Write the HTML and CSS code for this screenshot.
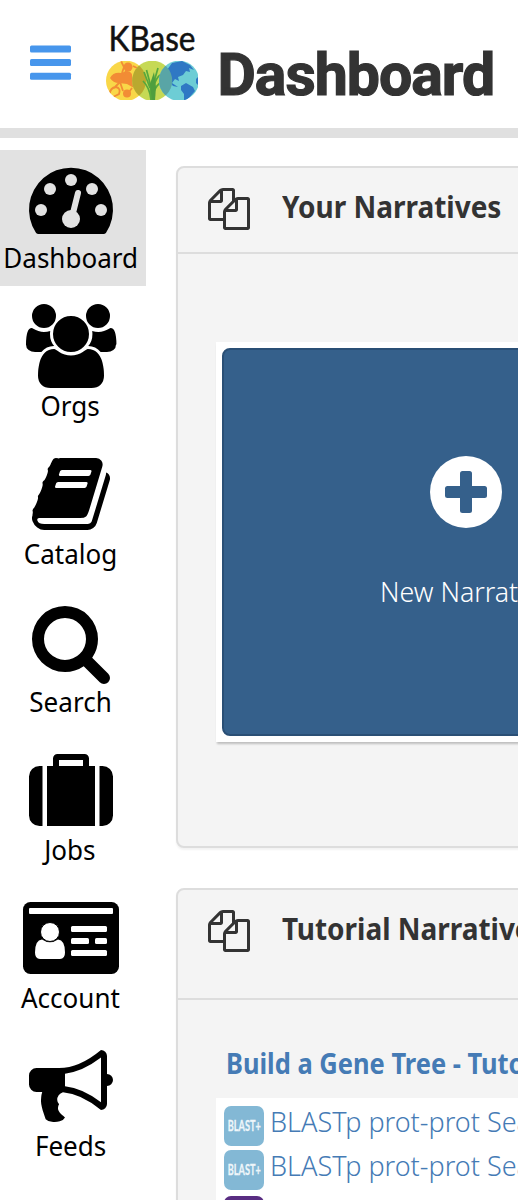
FILE: index.html
```html
<!DOCTYPE html>
<html lang="en">
<head>
<meta charset="utf-8">
<title>KBase Dashboard</title>
<link rel="stylesheet" href="styles.css">
</head>
<body>
<svg class="defs" width="0" height="0" aria-hidden="true">
  <symbol id="copy" viewBox="0 0 1792 1792"><path d="M1696 384q40 0 68 28t28 68v1216q0 40-28 68t-68 28h-960q-40 0-68-28t-28-68v-288h-544q-40 0-68-28t-28-68v-672q0-40 20-88t48-76l408-408q28-28 76-48t88-20h416q40 0 68 28t28 68v328q68-40 128-40h416zm-544 213l-299 299h299v-299zm-640-384l-299 299h299v-299zm196 647l316-316v-416h-384v416q0 40-28 68t-68 28h-416v640h512v-256q0-40 20-88t48-76zm956 804v-1152h-384v416q0 40-28 68t-68 28h-416v640h896z"/></symbol>
</svg>
<header class="topbar">
  <svg class="menu" viewBox="0 0 42 36"><g fill="#4796ec"><rect x="0" y="0.4" width="41" height="7" rx="1.5"/><rect x="0" y="14.1" width="41" height="7" rx="1.5"/><rect x="0" y="27.8" width="41" height="7" rx="1.5"/></g></svg>
  <svg class="logo" viewBox="106 20 92 84">
    <clipPath id="c1"><circle cx="126" cy="80.7" r="20"/></clipPath>
    <clipPath id="c3"><circle cx="179" cy="80.7" r="20"/></clipPath>
    <clipPath id="low"><rect x="106" y="61" width="92" height="39"/></clipPath>
    <text x="108.500" y="50.5" textLength="87" lengthAdjust="spacingAndGlyphs" class="logo-text">KBase</text>
    <g clip-path="url(#low)">
      <circle cx="126" cy="80.7" r="20" fill="#f9d748"/>
      <g clip-path="url(#c1)" fill="#f28c35" stroke="#f28c35">
        <path d="M110 78q3-6 11-5l6-2q6 1 5 6l7 7-3 5-9-5-8-1q-6 0-9-5z" stroke="none"/>
        <circle cx="128" cy="67" r="4.5" stroke="none"/><circle cx="127" cy="93.500" r="4" stroke="none"/>
        <path d="M121 61l3 6-2 6M126 71l-2 4M120 82l-6 6M120 82l3 9M110 96q-1-8 6-9 5 1 3 7l-6 3M133 66l4 2M132 88l-3 4" fill="none" stroke-width="1.8"/>
      </g>
      <circle cx="152.200" cy="80.700" r="20" fill="#c6d955"/>
      <circle cx="152.200" cy="80.700" r="20" fill="#b9a92f" clip-path="url(#c1)"/>
      <path d="M151.500 101l-1-16-4-15M152 100l2-18 4-14M151 100q-1-12-8-19M152 100q1-12 9-18M150 88l-6-16M153 88q3-10 7-13" fill="none" stroke="#56a83d" stroke-width="1.700"/>
      <path d="M150 84l2 17h3l1-14-2-15z" fill="#4e9e3e"/>
      <circle cx="179" cy="80.700" r="20" fill="#6dcdd5"/>
      <g clip-path="url(#c3)" fill="#2f78c4">
        <path d="M167 70l5-7 10-2 8 4 4 5-5-2 1 4-4-1-3 4-5 2 1 4-4-2-3 4 6 4-5-1-6-7z"/>
        <path d="M181 86l5-3 7 4 2 4-7 8-4 3 0-8-3-4zM196 79l3-3v10l-3-3z"/>
        <circle cx="152.200" cy="80.700" r="20" fill="#59a5a6"/>
      </g>
    </g>
  </svg>
  <h1 class="title">Dashboard</h1>
</header>
<div class="layout">
  <nav class="side">
    <a class="item active">
      <svg class="glyph" viewBox="0 0 146 89"><path d="M38 84Q36.500 84 35.800 82.600A42 42 0 1 1 106.200 82.600Q105.500 84 104 84Z"/><g fill="#e2e2e2"><circle cx="71" cy="30" r="6"/><circle cx="50" cy="39" r="6"/><circle cx="92" cy="39" r="6"/><circle cx="41" cy="60" r="6"/><circle cx="101" cy="60" r="6"/><circle cx="71" cy="69" r="9"/><path d="M72 67L78 43" stroke="#e2e2e2" stroke-width="6" stroke-linecap="round"/></g></svg>
      <span class="label">Dashboard</span>
    </a>
    <a class="item">
      <svg class="glyph" viewBox="0 0 146 89"><path transform="translate(23 6) scale(.046875)" d="M657 896q-162 5-265 128h-134q-82 0-138-40.500t-56-118.500q0-353 124-353 6 0 43.500 21t97.500 42.500 119 21.500q67 0 133-23-5 37-5 66 0 159 90 256zm1071 637q0 120-73 189.500t-194 69.500h-874q-121 0-194-69.500t-73-189.500q0-53 3.500-103.500t14-109 26.500-108.500 43-97.500 62-81 85.500-53.500 111.500-20q10 0 43 21.500t73 48 107 48 135 21.500 135-21.500 107-48 73-48 43-21.500q61 0 111.500 20t85.500 53.500 62 81 43 97.500 26.500 108.500 14 109 3.500 103.500zm-1024-1277q0 106-75 181t-181 75-181-75-75-181 75-181 181-75 181 75 75 181zm704 384q0 159-112.500 271.500t-271.500 112.500-271.500-112.500-112.500-271.500 112.500-271.500 271.500-112.500 271.500 112.500 112.500 271.500zm576 225q0 78-56 118.500t-138 40.500h-134q-103-123-265-128 90-97 90-256 0-29-5-66 66 23 133 23 59 0 119-21.500t97.500-42.500 43.500-21q124 0 124 353zm-128-609q0 106-75 181t-181 75-181-75-75-181 75-181 181-75 181 75 75 181z"/></svg>
      <span class="label">Orgs</span>
    </a>
    <a class="item">
      <svg class="glyph" viewBox="0 0 146 89"><path transform="translate(29 6) scale(.046875)" d="M1703 478q40 57 18 129l-275 906q-19 64-76.500 107.500t-122.500 43.500h-923q-77 0-148.500-53.500t-99.500-131.500q-24-67-2-127 0-4 3-27t4-37q1-8-3-21.500t-3-19.500q2-11 8-21t16.500-23.500 16.500-23.500q23-38 45-91.500t30-91.500q3-10 .5-30t-.5-28q3-11 17-28t17-23q21-36 42-92t25-90q1-9-2.500-32t.5-28q4-13 22-30.500t22-22.500q19-26 42.500-84.500t27.500-96.500q1-8-3-25.500t-2-26.500q2-8 9-18t18-23 17-21q8-12 16.500-30.500t15-35 16-36 19.500-32 26.500-23.500 36-11.500 47.500 5.500l-1 3q38-9 51-9h761q74 0 114 56t18 130l-274 906q-36 119-71.500 153.500t-128.500 34.500h-869q-27 0-38 15-11 16-1 43 24 70 144 70h923q29 0 56-15.500t35-41.500l300-987q7-22 5-57 38 15 59 43zm-1064 2q-4 13 2 22.500t20 9.500h608q13 0 25.500-9.500t16.500-22.500l21-64q4-13-2-22.500t-20-9.500h-608q-13 0-25.500 9.500t-16.500 22.500zm-83 256q-4 13 2 22.500t20 9.500h608q13 0 25.500-9.500t16.500-22.500l21-64q4-13-2-22.500t-20-9.500h-608q-13 0-25.500 9.500t-16.500 22.500z"/></svg>
      <span class="label">Catalog</span>
    </a>
    <a class="item">
      <svg class="glyph" viewBox="0 0 146 89"><path transform="translate(29 6) scale(.046875)" d="M1216 832q0-185-131.500-316.500t-316.500-131.500-316.500 131.500-131.500 316.500 131.500 316.500 316.500 131.500 316.500-131.500 131.500-316.500zm512 832q0 52-38 90t-90 38q-54 0-90-38l-343-342q-179 124-399 124-143 0-273.500-55.500t-225-150-150-225-55.500-273.500 55.500-273.500 150-225 225-150 273.500-55.500 273.500 55.500 225 150 150 225 55.500 273.500q0 220-124 399l343 343q37 37 37 90z"/></svg>
      <span class="label">Search</span>
    </a>
    <a class="item">
      <svg class="glyph" viewBox="0 0 146 89"><path transform="translate(29 12) scale(.046875)" d="M640 256h512v-128h-512v128zm-352 0v1280h-64q-92 0-158-66t-66-158v-832q0-92 66-158t158-66h64zm1120 0v1280h-1024v-1280h128v-160q0-40 28-68t68-28h576q40 0 68 28t28 68v160h128zm384 224v832q0 92-66 158t-158 66h-64v-1280h64q92 0 158 66t66 158z"/></svg>
      <span class="label">Jobs</span>
    </a>
    <a class="item">
      <svg class="glyph" viewBox="0 0 146 89"><rect x="23" y="12" width="96" height="72" rx="7.500"/><g fill="#fff"><rect x="29" y="18" width="84" height="6" rx="1"/><path d="M42 49.500Q50 55 58 49.500Q65 50 65 62.500Q65 69 60 69H40Q35 69 35 62.500Q35 50 42 49.500Z"/><circle cx="50" cy="42" r="9.500" stroke="#000" stroke-width="1"/><rect x="71" y="36" width="36" height="6" rx="1.500"/><rect x="71" y="48" width="18" height="6" rx="1.500"/><rect x="95" y="48" width="12" height="6" rx="1.500"/><rect x="71" y="60" width="36" height="6" rx="1.500"/></g></svg>
      <span class="label">Account</span>
    </a>
    <a class="item">
      <svg class="glyph" viewBox="0 0 146 89"><path transform="translate(29 6) scale(.046875)" d="M1664 640q53 0 90.500 37.500t37.500 90.500-37.500 90.500-90.500 37.500v384q0 52-38 90t-90 38q-417-347-812-380-58 19-91 66t-31 100.500 40 92.500q-20 33-23 65.500t6 58 33.500 55 48 50 61.500 50.500q-29 58-111.500 83t-168.500 11.500-132-55.500q-7-23-29.500-87.500t-32-94.500-23-89-15-101 3.500-98.500 22-110.500h-122q-66 0-113-47t-47-113v-192q0-66 47-113t113-47h480q435 0 896-384 52 0 90 38t38 90v384zm-128 604v-954q-394 302-768 343v270q377 42 768 341z"/></svg>
      <span class="label">Feeds</span>
    </a>
  </nav>
  <main class="content">
    <section class="panel narratives">
      <div class="panel-head"><svg class="copy"><use href="#copy"/></svg><h2 class="panel-title">Your Narratives</h2></div>
      <div class="card">
        <div class="new-button">
          <svg class="plus" viewBox="0 0 72 72"><circle cx="36" cy="36" r="36" fill="#fff"/><rect x="15" y="30" width="42" height="12" rx="2.500"/><rect x="30" y="15" width="12" height="42" rx="2.500"/></svg>
          <span class="new-text">New Narrative</span>
        </div>
      </div>
    </section>
    <section class="panel tutorials">
      <div class="panel-head tall"><svg class="copy"><use href="#copy"/></svg><h2 class="panel-title">Tutorial Narratives</h2></div>
      <h3 class="tutorial-title"><span class="tutorial-text">Build a Gene Tree - Tutorial</span></h3>
      <div class="apps">
        <div class="app"><svg class="badge" viewBox="0 0 40 40"><rect width="40" height="40" rx="7" fill="#83b8d5"/><text x="3.800" y="25" textLength="33" lengthAdjust="spacingAndGlyphs" class="badge-text">BLAST+</text></svg><span class="app-name">BLASTp prot-prot Search</span></div>
        <div class="app"><svg class="badge" viewBox="0 0 40 40"><rect width="40" height="40" rx="7" fill="#83b8d5"/><text x="3.800" y="25" textLength="33" lengthAdjust="spacingAndGlyphs" class="badge-text">BLAST+</text></svg><span class="app-name">BLASTp prot-prot Search</span></div>
        <div class="app purple"><svg class="badge" viewBox="0 0 40 40"><rect width="40" height="40" rx="7" fill="#592d82"/></svg></div>
      </div>
    </section>
  </main>
</div>
</body>
</html>
```
FILE: styles.css
```css
* { box-sizing: border-box; }
html, body { margin: 0; height: 1200px; overflow: hidden; }
body { width: 518px; background: #fff; color: #333; font-family: "Noto Sans", sans-serif; }
h1, h2, h3 { margin: 0; }
.defs { display: block; height: 0; }
svg { display: block; flex: none; }
.topbar { display: flex; height: 138px; border-bottom: 10px solid #e0e0e0; padding-left: 30px; }
.menu { width: 42px; height: 36px; margin-top: 45px; }
.logo { width: 92px; height: 84px; margin: 20px 0 0 34px; overflow: visible; }
.logo-text { font: 400 35px Lato, sans-serif; fill: #111; stroke: #111; stroke-width: .5px; }
.title { font: 700 59px/70px Roboto, sans-serif; letter-spacing: -1px; margin: 40px 0 0 19.5px; -webkit-text-stroke: 1.2px #333; }
.layout { display: flex; height: 1062px; }
.side { flex: none; width: 146px; padding-top: 12px; display: flex; flex-direction: column; gap: 12px; }
.item { display: flex; flex-direction: column; align-items: center; height: 136px; flex: none; color: #000; white-space: nowrap; }
.active { background: #e2e2e2; }
.glyph { width: 146px; height: 89px; overflow: visible; }
.label { font-size: 28px; line-height: 36px; transform: scaleX(.93) translateX(-3px); }
.content { flex: 1; min-width: 0; overflow: hidden; padding: 28px 0 0 30px; }
.panel { width: 620px; background: #f4f4f4; border: 2px solid #ddd; border-radius: 8px; box-shadow: 0 2px 2px rgba(0,0,0,.05); }
.narratives { height: 682px; }
.tutorials { height: 500px; margin-top: 40px; }
.panel-head { display: flex; height: 86px; border-bottom: 2px solid #ddd; padding: 20px 0 0 30px; }
.tall { height: 110px; }
.copy { width: 42px; height: 42px; fill: #333; }
.panel-title { font-size: 31px; line-height: 40px; margin-left: 32px; margin-top: -2px; white-space: nowrap; transform-origin: 0 0; transform: scaleX(.902); }
.card { width: 500px; height: 400px; margin: 88px 0 0 38px; padding: 6px; background: #fff; box-shadow: 1px 2px 2px rgba(0,0,0,.22); }
.new-button { height: 388px; border: 2px solid #2a4f75; border-radius: 8px; background: #35608b; color: #fff; display: flex; flex-direction: column; align-items: center; padding-top: 106px; }
.plus { width: 72px; height: 72px; fill: #35608b; }
.new-text { font-size: 28px; font-weight: 350; line-height: 40px; margin-top: 43px; white-space: nowrap; transform: scaleX(.955); }
.tutorial-title { font-size: 28px; line-height: 40px; height: 40px; margin: 43px 0 0 47.5px; color: #457bb5; white-space: nowrap; }
.tutorial-text { display: inline-block; transform-origin: 0 0; transform: scaleX(.91); }
.apps { margin: 15px 0 0 38px; padding: 8px; background: #fff; height: 300px; }
.app { display: flex; height: 44px; }
.purple { padding-top: 2px; }
.badge { width: 40px; height: 40px; }
.badge-text { font: 700 15.5px Lato, sans-serif; fill: #eef6fa; stroke: #eef6fa; stroke-width: .3px; }
.app-name { font-size: 28px; font-weight: 350; line-height: 36px; margin: -3px 0 0 6px; color: #457bb5; white-space: nowrap; transform-origin: 0 0; transform: scaleX(.965); }
```
